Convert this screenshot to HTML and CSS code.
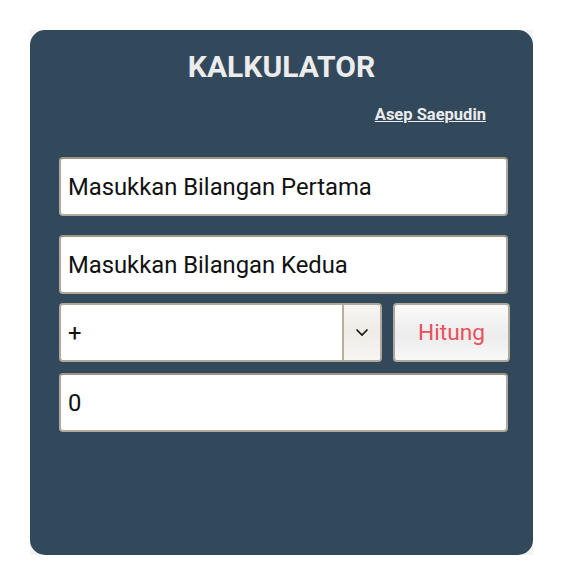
FILE: index.html
```html
<!DOCTYPE html>
<html>
<head>
<meta charset="utf-8">
<link rel="stylesheet" href="styles.css">
</head>
<body>
<div class="wrap">
  <div class="card">
    <h1 class="title">KALKULATOR</h1>
    <div class="author"><a href="#">Asep Saepudin</a></div>
    <div class="field first">Masukkan Bilangan Pertama</div>
    <div class="field">Masukkan Bilangan Kedua</div>
    <div class="row">
      <div class="select">
        <span class="sel-val">+</span>
        <span class="sel-btn">
          <svg width="14" height="9" viewBox="0 0 14 9"><path d="M1.5 1.5 L7 7 L12.5 1.5" fill="none" stroke="#111" stroke-width="1.6"/></svg>
        </span>
      </div>
      <div class="btn">Hitung</div>
    </div>
    <div class="field result">0</div>
  </div>
</div>
</body>
</html>
```
FILE: styles.css
```css
html, body { margin: 0; padding: 0; background: #fff; }
body { padding: 30px; font-family: Roboto, "Liberation Sans", sans-serif; }
.wrap { width: 503px; background: #f3f3f3; }
.card {
  background: #32495c;
  border-radius: 15px;
  height: 525px;
  box-sizing: border-box;
  padding: 19px 0 0 29px;
}
.title {
  margin: 0;
  width: 503px;
  margin-left: -29px;
  text-align: center;
  font-size: 30px;
  font-weight: 700;
  color: #ececec;
  line-height: 36px;
}
.author {
  width: 427px;
  text-align: right;
  margin-top: 20px;
  height: 20px;
  line-height: 20px;
}
.author a {
  color: #ececec;
  font-weight: 700;
  font-size: 16.5px;
  text-decoration: underline;
}
.field {
  width: 449px;
  height: 59px;
  box-sizing: border-box;
  background: #fff;
  border: 2px solid #b0a89c;
  border-top-color: #a09685;
  border-radius: 4px;
  font-size: 23.8px;
  color: #111;
  padding: 0 7px;
  display: flex;
  align-items: center;
  margin-top: 19px;
}
.field.first { margin-top: 32px; }
.row {
  display: flex;
  gap: 11px;
  margin-top: 9px;
  height: 59px;
}
.row + .field { margin-top: 11px; }
.select {
  width: 323px;
  height: 59px;
  box-sizing: border-box;
  border: 2px solid #b0a89c;
  border-radius: 4px;
  background: #fff;
  display: flex;
  overflow: hidden;
}
.sel-val { flex: 1; display: flex; align-items: center; padding-left: 7px; font-size: 23.8px; color: #111; }
.sel-btn {
  width: 36px;
  border-left: 2px solid #b7ae9f;
  background: linear-gradient(#f6f5f2, #efece6 50%, #f6f5f2);
  display: flex;
  align-items: center;
  justify-content: center;
}
.btn {
  width: 117px;
  height: 59px;
  box-sizing: border-box;
  border: 2px solid #b0a89c;
  border-radius: 4px;
  background: linear-gradient(#fafafa, #ececec 55%, #f8f8f8);
  color: #ea4f5c;
  font-size: 22.7px;
  display: flex;
  align-items: center;
  justify-content: center;
}
```
